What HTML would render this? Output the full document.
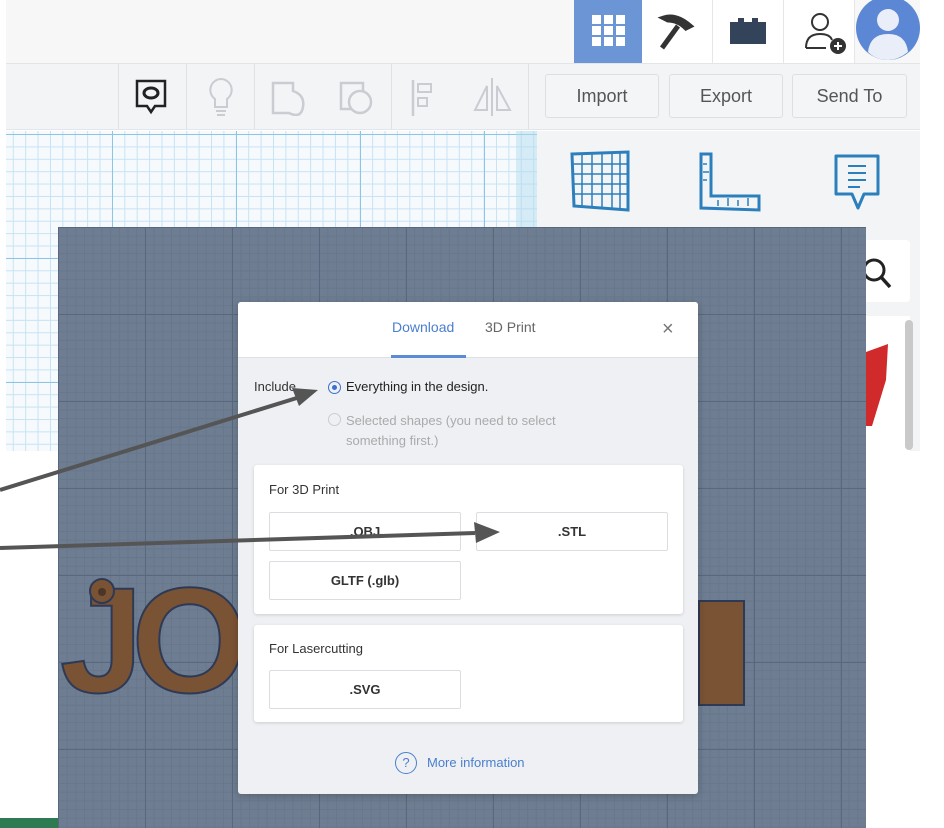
<!DOCTYPE html>
<html><head><style>
*{margin:0;padding:0;box-sizing:border-box}
body{width:944px;height:828px;position:relative;overflow:hidden;background:#fff;font-family:"Liberation Sans",sans-serif}
.abs{position:absolute}
.btn{position:absolute;border:1px solid #dcdfe3;border-radius:3px;background:#f4f5f7;color:#555;font-size:18px;display:flex;align-items:center;justify-content:center}
.mb{position:absolute;border:1px solid #dadde2;border-radius:2px;background:#fff;color:#333;font-size:13px;font-weight:bold;display:flex;align-items:center;justify-content:center}
.card{position:absolute;background:#fff;border-radius:3px;box-shadow:0 1px 3px rgba(0,0,0,.15)}
</style></head><body>
<div class="abs" style="left:6px;top:0;width:914px;height:63px;background:#f7f7f7"></div>
<div class="abs" style="left:574px;top:0;width:68px;height:63px;background:#6c95d6"></div>
<svg class="abs" style="left:592px;top:15px" width="34" height="32"><g fill="#fff"><rect x="0" y="0" width="9" height="9"/><rect x="12" y="0" width="9" height="9"/><rect x="24" y="0" width="9" height="9"/><rect x="0" y="11" width="9" height="9"/><rect x="12" y="11" width="9" height="9"/><rect x="24" y="11" width="9" height="9"/><rect x="0" y="22" width="9" height="9"/><rect x="12" y="22" width="9" height="9"/><rect x="24" y="22" width="9" height="9"/></g></svg>
<div class="abs" style="left:642px;top:0;width:212px;height:63px;background:#fff"></div>
<div class="abs" style="left:712px;top:0;width:1px;height:63px;background:#e6e6e6"></div>
<div class="abs" style="left:783px;top:0;width:1px;height:63px;background:#e6e6e6"></div>
<div class="abs" style="left:854px;top:0;width:1px;height:63px;background:#e6e6e6"></div>
<svg class="abs" style="left:656px;top:12px" width="44" height="44"><path d="M8 6 Q20 2 34 14 L30 16 Q22 8 12 8Z M22 14 L6 36" stroke="#333" stroke-width="5" fill="#333"/></svg>
<svg class="abs" style="left:728px;top:16px" width="40" height="30"><path d="M2 6h8v-4h6v4h8v-4h6v4h8v22h-36z" fill="#33435a"/></svg>
<svg class="abs" style="left:800px;top:10px" width="48" height="46"><circle cx="20" cy="12" r="8" fill="none" stroke="#333" stroke-width="2"/><path d="M6 38 Q6 24 20 24 Q30 24 32 30 M6 38 H26" fill="none" stroke="#333" stroke-width="2"/><circle cx="38" cy="36" r="8" fill="#333"/><path d="M34 36h8M38 32v8" stroke="#fff" stroke-width="2"/></svg>
<svg class="abs" style="left:856px;top:0" width="64" height="60"><circle cx="32" cy="28" r="32" fill="#5b87d4"/><circle cx="32" cy="20" r="11" fill="#e9eef8"/><path d="M12 52 Q14 34 32 34 Q50 34 52 52 Q42 60 32 60 Q20 60 12 52Z" fill="#e9eef8"/></svg>
<div class="abs" style="left:6px;top:63px;width:914px;height:67px;background:#f3f4f6;border-top:1px solid #e4e5e8;border-bottom:1px solid #e4e5e8"></div>
<div class="abs" style="left:118px;top:64px;width:1px;height:65px;background:#e0e1e4"></div>
<div class="abs" style="left:186px;top:64px;width:1px;height:65px;background:#e0e1e4"></div>
<div class="abs" style="left:254px;top:64px;width:1px;height:65px;background:#e0e1e4"></div>
<div class="abs" style="left:391px;top:64px;width:1px;height:65px;background:#e0e1e4"></div>
<div class="abs" style="left:528px;top:64px;width:1px;height:65px;background:#e0e1e4"></div>
<svg class="abs" style="left:134px;top:78px" width="36" height="40"><path d="M3 3h28v25h-10l-4 6-4-6h-10z" fill="none" stroke="#222" stroke-width="2.5"/><ellipse cx="17" cy="15" rx="7" ry="5" fill="none" stroke="#222" stroke-width="3"/></svg>
<svg class="abs" style="left:204px;top:76px" width="34" height="42"><path d="M17 3a11 11 0 0 0-6 20v8h12v-8a11 11 0 0 0-6-20zM12 35h10M13 39h8" fill="none" stroke="#c9ccd1" stroke-width="2"/></svg>
<svg class="abs" style="left:270px;top:80px" width="40" height="36"><path d="M3 3h20v8q12 4 10 16t-14 6h-16z" fill="none" stroke="#c9ccd1" stroke-width="2.5"/></svg>
<svg class="abs" style="left:338px;top:80px" width="40" height="36"><rect x="3" y="3" width="22" height="26" fill="none" stroke="#c9ccd1" stroke-width="2.5"/><circle cx="22" cy="22" r="11" fill="#f3f4f6" stroke="#c9ccd1" stroke-width="2.5"/></svg>
<svg class="abs" style="left:410px;top:78px" width="34" height="40"><path d="M3 2v36" stroke="#c9ccd1" stroke-width="2.5"/><rect x="8" y="6" width="13" height="8" fill="none" stroke="#c9ccd1" stroke-width="2"/><rect x="8" y="20" width="9" height="8" fill="none" stroke="#c9ccd1" stroke-width="2"/></svg>
<svg class="abs" style="left:468px;top:76px" width="50" height="42"><path d="M24 2v38" stroke="#c9ccd1" stroke-width="2"/><path d="M19 10 L7 34 H19Z M29 10 L42 34 H29Z" fill="none" stroke="#c9ccd1" stroke-width="2"/></svg>
<div class="btn" style="left:545px;top:74px;width:114px;height:44px">Import</div>
<div class="btn" style="left:669px;top:74px;width:114px;height:44px">Export</div>
<div class="btn" style="left:792px;top:74px;width:115px;height:44px">Send To</div>
<div class="abs" style="left:6px;top:131px;width:531px;height:320px;background-color:#f6fafd;background-image:linear-gradient(#8cc4e4 1px,transparent 1px),linear-gradient(90deg,#8cc4e4 1px,transparent 1px),linear-gradient(#c6e3f3 1px,transparent 1px),linear-gradient(90deg,#c6e3f3 1px,transparent 1px);background-size:124px 124px,124px 124px,12.4px 12.4px,12.4px 12.4px;background-position:-18px 3px,-18px 3px,-18px 3px,-18px 3px"></div>
<div class="abs" style="left:516px;top:131px;width:21px;height:320px;background:rgba(180,220,240,.5)"></div>
<div class="abs" style="left:537px;top:131px;width:383px;height:320px;background:#f3f4f6"></div>
<svg class="abs" style="left:568px;top:150px" width="64" height="64"><path d="M4 4 L60 2 L60 60 L6 56Z" fill="none" stroke="#2c7fbd" stroke-width="3"/><path d="M14 4v53M24 4v54M34 3v55M44 3v56M52 3v57M5 14h55M5 24h55M5 34h55M5 44h55" stroke="#2c7fbd" stroke-width="1.5"/></svg>
<svg class="abs" style="left:698px;top:150px" width="64" height="66"><path d="M3 4h10v42h48v14l-58-2z" fill="none" stroke="#2c7fbd" stroke-width="3"/><path d="M5 14h4M5 22h6M5 30h4M20 56v-6M30 56v-8M40 56v-6M50 56v-8" stroke="#2c7fbd" stroke-width="1.5"/></svg>
<svg class="abs" style="left:832px;top:150px" width="52" height="64"><path d="M4 6h42v38h-14l-6 14-6-14h-16z" fill="none" stroke="#2c7fbd" stroke-width="3" stroke-linejoin="round"/><path d="M16 16h18M16 23h18M16 30h18M16 37h12" stroke="#2c7fbd" stroke-width="2"/></svg>
<div class="abs" style="left:855px;top:240px;width:55px;height:62px;background:#fff;border-radius:4px"></div>
<svg class="abs" style="left:862px;top:256px" width="32" height="34"><circle cx="12" cy="14" r="10" fill="none" stroke="#222" stroke-width="3"/><path d="M19 21l9 10" stroke="#222" stroke-width="3.5"/></svg>
<div class="abs" style="left:855px;top:316px;width:55px;height:135px;background:#fff"></div>
<div class="abs" style="left:905px;top:320px;width:8px;height:130px;background:#c9c9c9;border-radius:4px"></div>
<svg class="abs" style="left:862px;top:330px" width="30" height="100"><path d="M4 22 L26 14 L24 50 L10 96 L4 96Z" fill="#d12a2a"/></svg>
<div class="abs" style="left:58px;top:227px;width:808px;height:601px;background-color:#6e7d91;background-image:linear-gradient(#58697f 1px,transparent 1px),linear-gradient(90deg,#58697f 1px,transparent 1px),linear-gradient(#67788c 1px,transparent 1px),linear-gradient(90deg,#67788c 1px,transparent 1px);background-size:87px 87px,87px 87px,8.7px 8.7px,8.7px 8.7px"></div>
<div class="abs" style="left:0;top:818px;width:58px;height:10px;background:#2e7a52"></div>
<div class="abs" style="left:60px;top:565px;font:bold 150px/1 'Liberation Sans',sans-serif;color:#7a5234;-webkit-text-stroke:2px #2e3a55;letter-spacing:-12px">JO</div>
<svg class="abs" style="left:86px;top:575px" width="40" height="40"><circle cx="16" cy="16" r="12" fill="#7a5234" stroke="#2e3a55" stroke-width="2"/><circle cx="16" cy="17" r="4" fill="#4a3526"/></svg>
<div class="abs" style="left:698px;top:600px;width:47px;height:106px;background:#7a5234;border:2px solid #2e3a55"></div>
<div class="abs" style="left:238px;top:302px;width:460px;height:492px;background:#eef0f3;border-radius:3px;box-shadow:0 2px 8px rgba(0,0,0,.2)"></div>
<div class="abs" style="left:238px;top:302px;width:460px;height:56px;background:#fff;border-bottom:1px solid #dde0e4;border-radius:3px 3px 0 0"></div>
<div class="abs" style="left:392px;top:319px;font-size:14px;color:#4a7fcf">Download</div>
<div class="abs" style="left:485px;top:319px;font-size:14px;color:#666">3D Print</div>
<div class="abs" style="left:391px;top:355px;width:75px;height:3px;background:#5b8ad6"></div>
<div class="abs" style="left:662px;top:318px;font-size:20px;color:#777">×</div>
<div class="abs" style="left:254px;top:379px;font-size:13px;color:#333">Include</div>
<div class="abs" style="left:328px;top:381px;width:13px;height:13px;border:1.5px solid #3a70d0;border-radius:50%"></div>
<div class="abs" style="left:332px;top:385px;width:5px;height:5px;background:#3a70d0;border-radius:50%"></div>
<div class="abs" style="left:346px;top:379px;font-size:13px;color:#222">Everything in the design.</div>
<div class="abs" style="left:328px;top:413px;width:13px;height:13px;border:1px solid #ccc;border-radius:50%"></div>
<div class="abs" style="left:346px;top:411px;font-size:13px;color:#aaa;line-height:20px">Selected shapes (you need to select<br>something first.)</div>
<div class="card" style="left:254px;top:465px;width:429px;height:149px"></div>
<div class="abs" style="left:269px;top:482px;font-size:13px;color:#333">For 3D Print</div>
<div class="mb" style="left:269px;top:512px;width:192px;height:39px">.OBJ</div>
<div class="mb" style="left:476px;top:512px;width:192px;height:39px">.STL</div>
<div class="mb" style="left:269px;top:561px;width:192px;height:39px">GLTF (.glb)</div>
<div class="card" style="left:254px;top:625px;width:429px;height:97px"></div>
<div class="abs" style="left:269px;top:641px;font-size:13px;color:#333">For Lasercutting</div>
<div class="mb" style="left:269px;top:670px;width:192px;height:39px">.SVG</div>
<div class="abs" style="left:395px;top:752px;width:22px;height:22px;border:1.5px solid #4a7fcf;border-radius:50%;color:#4a7fcf;font-size:13px;text-align:center;line-height:19px">?</div>
<div class="abs" style="left:427px;top:755px;font-size:13px;color:#4a7fcf">More information</div>
<svg class="abs" style="left:0;top:0" width="944" height="828"><g stroke="#555" stroke-width="4" fill="#555"><line x1="0" y1="490" x2="300" y2="397"/><line x1="0" y1="548" x2="475" y2="533"/></g><polygon points="318,390 292,388 299,406" fill="#555"/><polygon points="500,532 474,522 476,543" fill="#555"/></svg>
</body></html>
